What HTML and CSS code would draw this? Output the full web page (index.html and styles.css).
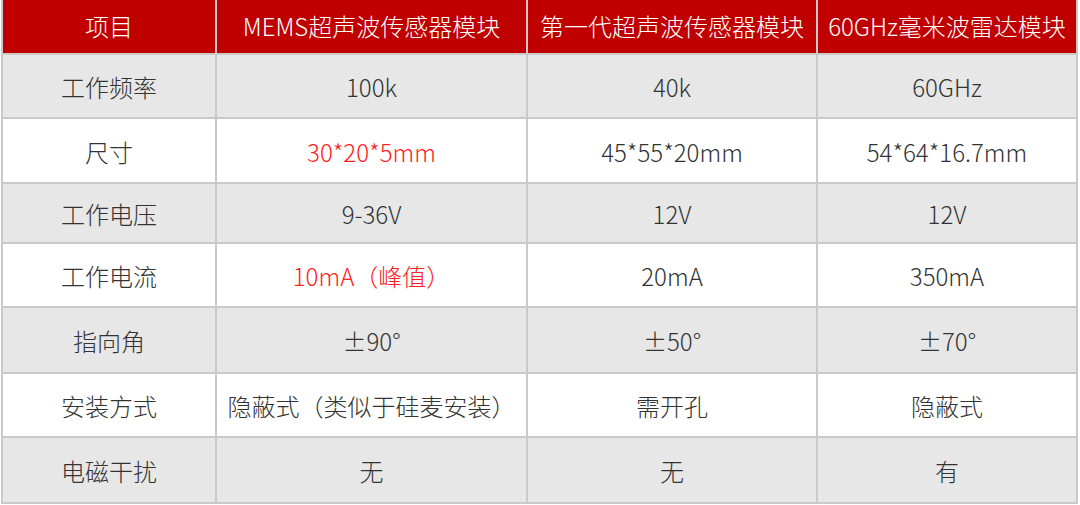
FILE: index.html
```html
<!DOCTYPE html>
<html lang="zh-CN">
<head>
<meta charset="utf-8">
<link rel="stylesheet" href="styles.css">
</head>
<body>
<div class="table">
  <div class="cell head">项目</div>
  <div class="cell head">MEMS超声波传感器模块</div>
  <div class="cell head">第一代超声波传感器模块</div>
  <div class="cell head">60GHz毫米波雷达模块</div>

  <div class="cell gray r1">工作频率</div>
  <div class="cell gray r1">100k</div>
  <div class="cell gray r1">40k</div>
  <div class="cell gray r1">60GHz</div>

  <div class="cell r2">尺寸</div>
  <div class="cell r2 red">30*20*5mm</div>
  <div class="cell r2">45*55*20mm</div>
  <div class="cell r2">54*64*16.7mm</div>

  <div class="cell gray r3">工作电压</div>
  <div class="cell gray r3">9-36V</div>
  <div class="cell gray r3">12V</div>
  <div class="cell gray r3">12V</div>

  <div class="cell r4">工作电流</div>
  <div class="cell r4 red">10mA（峰值）</div>
  <div class="cell r4">20mA</div>
  <div class="cell r4">350mA</div>

  <div class="cell gray r5">指向角</div>
  <div class="cell gray r5">±90°</div>
  <div class="cell gray r5">±50°</div>
  <div class="cell gray r5">±70°</div>

  <div class="cell r6">安装方式</div>
  <div class="cell r6">隐蔽式（类似于硅麦安装）</div>
  <div class="cell r6">需开孔</div>
  <div class="cell r6">隐蔽式</div>

  <div class="cell gray r7">电磁干扰</div>
  <div class="cell gray r7">无</div>
  <div class="cell gray r7">无</div>
  <div class="cell gray r7">有</div>
</div>
</body>
</html>
```
FILE: styles.css
```css
html, body {
  margin: 0;
  padding: 0;
  background: #ffffff;
}
body {
  font-family: "Noto Sans CJK SC", "Noto Sans", sans-serif;
  font-size: 24px;
  font-weight: 300;
  color: #333333;
}
.table {
  margin-left: 1px;
  width: 1077px;
  display: grid;
  grid-template-columns: 212px 309px 288px 258px;
  grid-template-rows: 53px 62px 63px 58px 62px 64px 62px 64px;
  column-gap: 2px;
  row-gap: 2px;
  padding: 0 2px 2px 2px;
  box-sizing: border-box;
  background: #c9c9c9;
}
.cell {
  display: flex;
  align-items: center;
  justify-content: center;
  background: #ffffff;
  white-space: nowrap;
  padding-top: 1px;
  box-sizing: border-box;
}
.head {
  background: #c00000;
  color: #ffffff;
  padding-top: 0;
  padding-bottom: 2px;
}
.gray {
  background: #e7e7e7;
}
.red {
  color: #ff2020;
}
```
